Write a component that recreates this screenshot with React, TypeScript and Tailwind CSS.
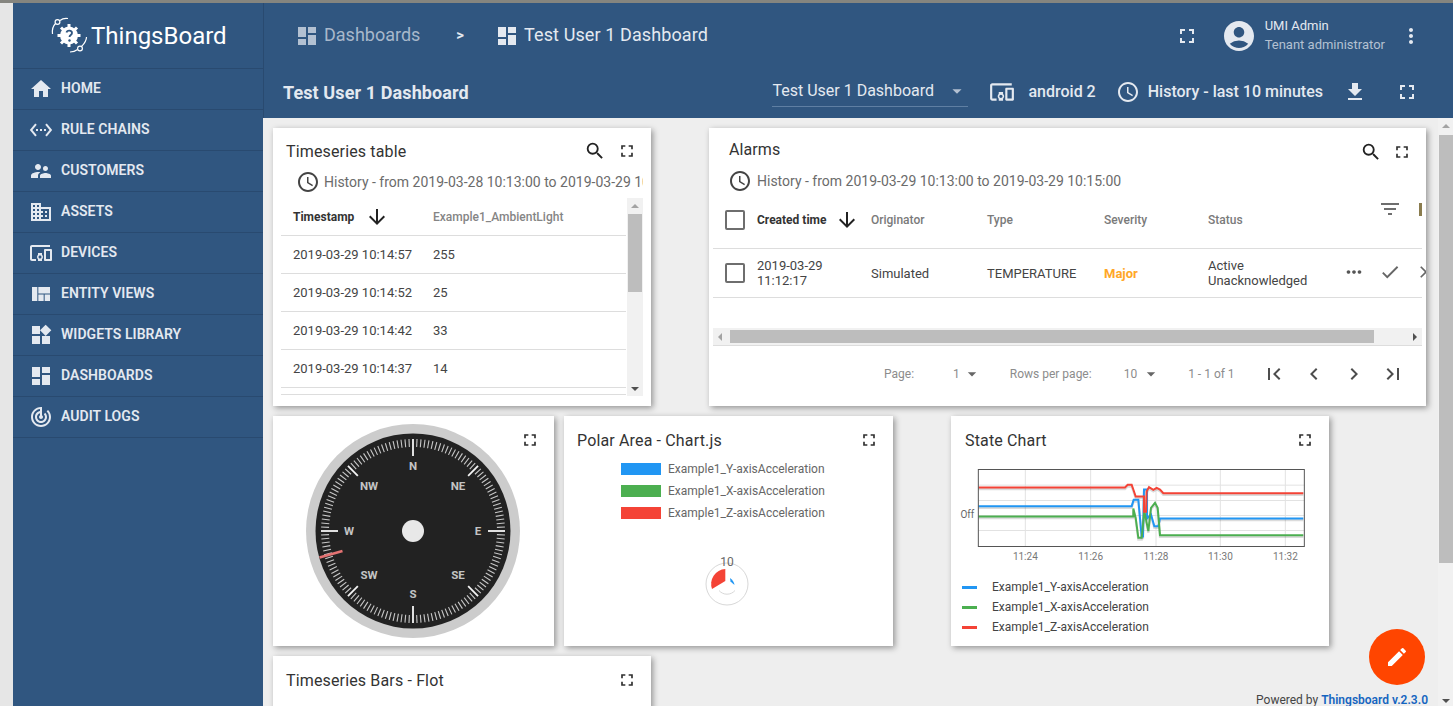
import type { ReactNode } from 'react';
import {
  MdAccessTime,
  MdAccountCircle,
  MdArrowDownward,
  MdArrowDropDown,
  MdCheck,
  MdChevronLeft,
  MdChevronRight,
  MdClose,
  MdDashboard,
  MdDevicesOther,
  MdDomain,
  MdEdit,
  MdFileDownload,
  MdFilterList,
  MdFirstPage,
  MdFullscreen,
  MdHome,
  MdLastPage,
  MdMoreHoriz,
  MdMoreVert,
  MdSearch,
  MdSettingsEthernet,
  MdSupervisorAccount,
  MdTrackChanges,
  MdViewQuilt,
  MdWidgets,
} from 'react-icons/md';

const NAV_ITEMS = [
  { label: 'HOME', Icon: MdHome },
  { label: 'RULE CHAINS', Icon: MdSettingsEthernet },
  { label: 'CUSTOMERS', Icon: MdSupervisorAccount },
  { label: 'ASSETS', Icon: MdDomain },
  { label: 'DEVICES', Icon: MdDevicesOther },
  { label: 'ENTITY VIEWS', Icon: MdViewQuilt },
  { label: 'WIDGETS LIBRARY', Icon: MdWidgets },
  { label: 'DASHBOARDS', Icon: MdDashboard },
  { label: 'AUDIT LOGS', Icon: MdTrackChanges },
];

const TABLE_ROWS = [
  { ts: '2019-03-29 10:14:57', value: '255' },
  { ts: '2019-03-29 10:14:52', value: '25' },
  { ts: '2019-03-29 10:14:42', value: '33' },
  { ts: '2019-03-29 10:14:37', value: '14' },
];

const SERIES = [
  { name: 'Example1_Y-axisAcceleration', swatch: 'bg-[#2196f3]' },
  { name: 'Example1_X-axisAcceleration', swatch: 'bg-[#4caf50]' },
  { name: 'Example1_Z-axisAcceleration', swatch: 'bg-[#f44336]' },
];

const RED_LINE = '100,229 540,229 548,221 560,221 566,238 572,256 597,256 597,302 603,302 605,240 612,228 625,236 635,230 645,235 655,246 1075,246';
const BLUE_LINE = '100,285 560,285 566,266 580,266 590,376 594,376 597,235 606,235 606,322 618,310 628,345 640,345 645,322 1075,322';
const GREEN_LINE = '100,316 565,316 565,292 572,320 580,380 590,380 598,300 610,360 618,290 630,275 638,290 645,372 1075,372';

function Logo() {
  return (
    <svg width="40" height="40" viewBox="50 17 40 40" className="shrink-0 text-white">
      <g fill="none" stroke="currentColor" strokeWidth="1.2">
        <circle cx="57.5" cy="23" r="2.4" />
        <path d="M60 21.5 C 63 19 65 19 68 19.5" />
        <path d="M55.5 24.5 C 53 27 52 31 52.5 35" />
        <circle cx="80" cy="49.5" r="2.4" />
        <path d="M77.6 50.5 C 75 52.5 73 53 70 53" />
        <path d="M81.5 47.5 C 84 45 86.5 42 86.5 38" />
      </g>
      <circle cx="69" cy="36.5" r="9" fill="currentColor" />
      <g stroke="currentColor" strokeWidth="3">
        <path d="M69 25v23M57.5 36.5h23M61 28.5l16 16M77 28.5l-16 16" />
      </g>
      <path d="M66.5 33.5c.5-2.5 5.5-2.5 5.5.5 0 2-2.5 2-2.5 4" fill="none" stroke="#305680" strokeWidth="1.8" />
      <circle cx="69.5" cy="41.5" r="1.2" fill="#305680" />
    </svg>
  );
}

function Sidebar() {
  return (
    <aside className="w-[250px] shrink-0 bg-[#305680] text-[#e4e9f0]">
      <div className="flex h-[65px] items-center gap-[1px] pl-[37px]">
        <Logo />
        <span className="text-[24px] leading-none text-white">ThingsBoard</span>
      </div>
      <nav className="border-t border-[#294a70]">
        {NAV_ITEMS.map(({ label, Icon }) => (
          <div key={label} className="flex h-[41px] items-center border-b border-[#294a70] pl-[16px]">
            <Icon size={24} className="shrink-0" />
            <span className="mb-[2px] ml-[8px] text-[14px] font-semibold tracking-[0.05px]">{label}</span>
          </div>
        ))}
      </nav>
    </aside>
  );
}

function Header() {
  return (
    <header className="h-[115px] shrink-0 border-l border-[#294a70] bg-[#305680] text-[#e4e9f0]">
      <div className="flex h-[65px] items-center pl-[31px] pr-[30px]">
        <MdDashboard size={24} className="text-[#b3c1d2]" />
        <span className="mb-[2px] ml-[5px] text-[18px] text-[#a8b8cb]">Dashboards</span>
        <span className="ml-[36px] text-[15px] font-bold">&gt;</span>
        <MdDashboard size={24} className="ml-[31px]" />
        <span className="mb-[2px] ml-[5px] text-[18px] tracking-[0.1px]">Test User 1 Dashboard</span>
        <MdFullscreen size={24} className="ml-auto" />
        <MdAccountCircle size={36} className="ml-[22px]" />
        <div className="ml-[8px] flex flex-col gap-[3px] text-[13px] leading-[16px]">
          <span>UMI Admin</span>
          <span className="text-[#b3c1d2]">Tenant administrator</span>
        </div>
        <MdMoreVert size={24} className="ml-[14px]" />
      </div>
      <div className="flex h-[50px] items-center pb-[2px] pl-[19px] pr-[34px]">
        <span className="text-[18px] font-bold tracking-[0.1px]">Test User 1 Dashboard</span>
        <div className="ml-auto flex h-[30px] w-[196px] items-center justify-between border-b border-[#5f7fa3] pb-[1px] text-[16px]">
          <span>Test User 1 Dashboard</span>
          <MdArrowDropDown size={22} className="text-[#b3c1d2]" />
        </div>
        <MdDevicesOther size={26} className="ml-[21px]" />
        <span className="ml-[13px] text-[16px] font-medium">android 2</span>
        <MdAccessTime size={24} className="ml-[20px]" />
        <span className="ml-[8px] text-[16px] font-medium">History - last 10 minutes</span>
        <MdFileDownload size={24} className="ml-[20px]" />
        <MdFullscreen size={24} className="ml-[28px]" />
      </div>
    </header>
  );
}

function Card({ className, children }: { className: string; children: ReactNode }) {
  return (
    <section className={`relative shrink-0 overflow-hidden bg-white shadow-[2px_2px_6px_rgba(0,0,0,0.38)] ${className}`}>
      {children}
    </section>
  );
}

function CardFullscreen() {
  return <MdFullscreen size={20} className="absolute top-[14px] right-[14px] text-[#2f2f2f]" />;
}

function TimeseriesTable() {
  return (
    <Card className="h-[278px] w-[378px]">
      <div className="flex h-[44px] items-center pt-[4px] pl-[13px] pr-[14px]">
        <h2 className="text-[16px] tracking-[0.15px] text-[#333]">Timeseries table</h2>
        <MdSearch size={22} className="ml-auto mb-[2px] text-[#222]" />
        <MdFullscreen size={20} className="ml-[11px] mb-[2px] text-[#2f2f2f]" />
      </div>
      <div className="flex h-[20px] w-[370px] items-center overflow-hidden pl-[23px] whitespace-nowrap text-[14px] text-[#6b6b6b]">
        <MdAccessTime size={24} className="shrink-0 text-[#444]" />
        <span className="ml-[4px]">History - from 2019-03-28 10:13:00 to 2019-03-29 10:15:00</span>
      </div>
      <div className="ml-[8px] mt-[6px] flex h-[198px] w-[362px]">
        <div className="w-[345px]">
          <div className="flex h-[38px] items-center border-b border-[#ddd] pl-[12px] text-[12px] font-medium">
            <span className="w-[72px] font-bold text-[#333]">Timestamp</span>
            <MdArrowDownward size={24} className="text-[#222]" />
            <span className="ml-[44px] text-[#858585]">Example1_AmbientLight</span>
          </div>
          {TABLE_ROWS.map((row) => (
            <div key={row.ts} className="flex h-[38px] items-center border-b border-[#ddd] pl-[12px] text-[13px] text-[#444]">
              <span className="w-[140px]">{row.ts}</span>
              <span>{row.value}</span>
            </div>
          ))}
          <div className="h-[7px] border-b border-[#ddd]" />
        </div>
        <div className="ml-[1px] flex w-[16px] flex-col items-center bg-[#f1f1f1]">
          <span className="mt-[6px] h-0 w-0 border-x-[4px] border-b-[4px] border-x-transparent border-b-[#a3a3a3]" />
          <span className="mt-[6px] h-[78px] w-[14px] bg-[#bdbdbd]" />
          <span className="mt-auto mb-[5px] h-0 w-0 border-x-[4px] border-t-[4px] border-x-transparent border-t-[#505050]" />
        </div>
      </div>
    </Card>
  );
}

function Checkbox({ className }: { className: string }) {
  return <span className={`block w-[20px] shrink-0 rounded-[2px] border-2 border-[#6e6e6e] ${className}`} />;
}

function AlarmsTable() {
  return (
    <Card className="h-[278px] w-[717px]">
      <div className="flex h-[43px] items-center pl-[20px] pr-[14px]">
        <h2 className="text-[16px] tracking-[0.1px] text-[#333]">Alarms</h2>
        <MdSearch size={22} className="ml-auto mt-[4px] text-[#222]" />
        <MdFullscreen size={20} className="ml-[10px] mt-[4px] text-[#2f2f2f]" />
      </div>
      <div className="flex h-[20px] items-center pl-[19px] text-[14px] text-[#6b6b6b]">
        <MdAccessTime size={24} className="text-[#444]" />
        <span className="ml-[5px]">History - from 2019-03-29 10:13:00 to 2019-03-29 10:15:00</span>
      </div>
      <div className="ml-[4px] mr-[4px] mt-[1px]">
        <div className="relative flex h-[57px] items-center border-b border-[#ddd] text-[12px] font-medium text-[#7a7a7a]">
          <Checkbox className="ml-[12px] h-[20px]" />
          <span className="ml-[12px] w-[72px] font-bold text-[#333]">Created time</span>
          <MdArrowDownward size={24} className="ml-[6px] text-[#222]" />
          <span className="ml-[12px] w-[116px]">Originator</span>
          <span className="w-[117px]">Type</span>
          <span className="w-[104px]">Severity</span>
          <span>Status</span>
          <MdFilterList size={24} className="absolute top-[5px] right-[20px] text-[#6e6e6e]" />
          <span className="absolute top-[11px] right-0 h-[13px] w-[3px] bg-[#8a7c4e]" />
        </div>
        <div className="relative flex h-[49px] items-center border-b border-[#ddd] text-[13px] leading-[15px] text-[#444]">
          <Checkbox className="ml-[12px] h-[20px]" />
          <span className="ml-[12px] w-[114px]">
            2019-03-29
            <br />
            11:12:17
          </span>
          <span className="w-[116px]">Simulated</span>
          <span className="w-[117px]">TEMPERATURE</span>
          <span className="w-[104px] font-bold text-[#ffa726]">Major</span>
          <span>
            Active
            <br />
            Unacknowledged
          </span>
          <MdMoreHoriz size={22} className="absolute top-[12px] right-[57px] text-[#555]" />
          <MdCheck size={22} className="absolute top-[12px] right-[21px] text-[#666]" />
          <MdClose size={20} className="absolute top-[13px] right-[-14px] text-[#666]" />
        </div>
        <div className="mt-[30px] flex h-[18px] items-center border-b border-[#ddd] bg-[#f1f1f1]">
          <span className="ml-[5px] h-0 w-0 border-y-[4px] border-r-[4px] border-y-transparent border-r-[#a3a3a3]" />
          <span className="ml-[8px] h-[13px] w-[644px] bg-[#bdbdbd]" />
          <span className="ml-auto mr-[5px] h-0 w-0 border-y-[4px] border-l-[4px] border-y-transparent border-l-[#505050]" />
        </div>
        <div className="flex h-[56px] items-center pl-[171px] text-[12px] text-[#8c8c8c]">
          <span>Page:</span>
          <span className="ml-[39px]">1</span>
          <MdArrowDropDown size={20} className="ml-[2px] text-[#666]" />
          <span className="ml-[28px]">Rows per page:</span>
          <span className="ml-[32px]">10</span>
          <MdArrowDropDown size={20} className="ml-[4px] text-[#666]" />
          <span className="ml-[27px]">1 - 1 of 1</span>
          <MdFirstPage size={24} className="ml-[27px] text-[#4d4d4d]" />
          <MdChevronLeft size={24} className="ml-[16px] text-[#4d4d4d]" />
          <MdChevronRight size={24} className="ml-[16px] text-[#4d4d4d]" />
          <MdLastPage size={24} className="ml-[15px] text-[#4d4d4d]" />
        </div>
      </div>
    </Card>
  );
}

function CompassDial() {
  const ticks = Array.from({ length: 144 }, (_, i) => i * 2.5);
  const majors = [0, 45, 90, 135, 180, 225, 270, 315];
  const labels = [
    { t: 'N', x: 0, y: -65 },
    { t: 'NE', x: 45, y: -45 },
    { t: 'E', x: 65, y: 0 },
    { t: 'SE', x: 45, y: 44 },
    { t: 'S', x: 0, y: 63 },
    { t: 'SW', x: -44, y: 44 },
    { t: 'W', x: -64, y: 0 },
    { t: 'NW', x: -44, y: -45 },
  ];
  return (
    <svg width="214" height="214" viewBox="-107 -107 214 214">
      <circle r="107" fill="#cccccc" />
      <circle r="97.5" fill="#222222" />
      {ticks.map((a) =>
        majors.includes(a) ? null : (
          <line key={a} x1="0" y1="-92" x2="0" y2="-84" stroke="#c8c8c8" strokeWidth="1.1" transform={`rotate(${a})`} />
        ),
      )}
      {majors.map((a) => (
        <line key={a} x1="0" y1="-92" x2="0" y2={a % 90 === 0 ? -75 : -78} stroke="#f5f5f5" strokeWidth="1.8" transform={`rotate(${a})`} />
      ))}
      {labels.map((l) => (
        <text key={l.t} x={l.x} y={l.y} textAnchor="middle" dominantBaseline="central" fontSize="11.5" fontWeight="700" fill="#c4c4c4">
          {l.t}
        </text>
      ))}
      <line x1="-93.5" y1="26.5" x2="-70.5" y2="20" stroke="#e57373" strokeWidth="2.6" />
      <circle r="11" fill="#e8e8e8" />
    </svg>
  );
}

function CompassCard() {
  return (
    <Card className="flex h-[230px] w-[281px] items-center justify-center pr-[1px]">
      <CompassDial />
      <CardFullscreen />
    </Card>
  );
}

function PolarChart() {
  return (
    <svg width="60" height="60" viewBox="-30 -30 60 60" className="mx-auto mt-[35px] translate-x-[-2px]">
      <circle r="21" fill="none" stroke="#d8d8d8" />
      <path d="M-8 6.5A10.5 10.5 0 0 0 8 6.5" fill="none" stroke="#d8d8d8" />
      <path d="M-1.7 -3V-15A15 15 0 0 0 -15 5Z" fill="#f44336" />
      <path d="M3 -6Q7 -3 7.5 1L3.5 -2.5Z" fill="#2196f3" />
      <text x="0" y="-18.5" textAnchor="middle" fontSize="12" fill="#666">
        10
      </text>
    </svg>
  );
}

function PolarCard() {
  return (
    <Card className="h-[230px] w-[329px]">
      <h2 className="pl-[13px] pt-[15px] text-[16px] leading-[20px] tracking-[0.15px] text-[#333]">Polar Area - Chart.js</h2>
      <CardFullscreen />
      <ul className="ml-[57px] mt-[12px] flex flex-col gap-[10px]">
        {SERIES.map((s) => (
          <li key={s.name} className="flex h-[12px] items-center text-[12px] text-[#666]">
            <span className={`h-[12px] w-[40px] ${s.swatch}`} />
            <span className="ml-[7px]">{s.name}</span>
          </li>
        ))}
      </ul>
      <PolarChart />
    </Card>
  );
}

// drawn in 3x units, same scale as the plot measurements
function StatePlot() {
  const vertical = [241, 437, 633, 826, 1021];
  const horizontal = [222, 268, 313, 358];
  const lines = [
    { points: BLUE_LINE, color: '#2196f3' },
    { points: GREEN_LINE, color: '#4caf50' },
    { points: RED_LINE, color: '#f44336' },
  ];
  return (
    <svg width="378" height="107" viewBox="18 150 1134 320" className="mt-[10px] block">
      {vertical.map((x) => (
        <line key={x} x1={x} y1="175" x2={x} y2="406" stroke="#e2e2e2" strokeWidth="3" />
      ))}
      {horizontal.map((y) => (
        <line key={y} x1="100" y1={y} x2="1078" y2={y} stroke="#e2e2e2" strokeWidth="3" />
      ))}
      {lines.map((l) => (
        <polyline key={`${l.color}-shadow`} points={l.points} fill="none" stroke="#000" strokeOpacity="0.14" strokeWidth="7" transform="translate(0 5)" />
      ))}
      {lines.map((l) => (
        <polyline key={l.color} points={l.points} fill="none" stroke={l.color} strokeWidth="6" />
      ))}
      <rect x="100" y="175" width="978" height="231" fill="none" stroke="#555" strokeWidth="3" />
      <text x="88" y="322" textAnchor="end" fontSize="30" fill="#666">
        Off
      </text>
      {['11:24', '11:26', '11:28', '11:30', '11:32'].map((t, i) => (
        <text key={t} x={vertical[i]} y="447" textAnchor="middle" fontSize="30" fill="#777">
          {t}
        </text>
      ))}
    </svg>
  );
}

function StateChartCard() {
  return (
    <Card className="h-[230px] w-[378px]">
      <h2 className="pl-[14px] pt-[15px] text-[16px] leading-[20px] tracking-[0.15px] text-[#333]">State Chart</h2>
      <CardFullscreen />
      <StatePlot />
      <ul className="ml-[11px] mt-[11px] flex flex-col gap-[4px]">
        {SERIES.map((s) => (
          <li key={s.name} className="flex h-[16px] items-center text-[12px] text-[#444]">
            <span className={`h-[3px] w-[15px] ${s.swatch}`} />
            <span className="ml-[15px]">{s.name}</span>
          </li>
        ))}
      </ul>
    </Card>
  );
}

function PageScrollbar() {
  return (
    <div className="flex w-[15px] shrink-0 flex-col items-center bg-[#f1f1f1]">
      <span className="mt-[6px] h-0 w-0 border-x-[4px] border-b-[4px] border-x-transparent border-b-[#a3a3a3]" />
      <span className="mt-[7px] h-[428px] w-[14px] bg-[#bdbdbd]" />
      <span className="mt-auto mb-[3px] h-0 w-0 border-x-[4px] border-t-[4px] border-x-transparent border-t-[#505050]" />
    </div>
  );
}

export default function App() {
  return (
    <div className="flex h-[706px] w-[1453px] flex-col overflow-hidden bg-[#e6e6e6] font-['Roboto',sans-serif]">
      <div className="h-[3px] shrink-0 bg-[#85857f]" />
      <div className="flex min-h-0 flex-1 pl-[13px]">
        <Sidebar />
        <main className="flex min-w-0 flex-1 flex-col">
          <Header />
          <div className="relative flex min-h-0 flex-1 bg-[#eeeeee]">
            <div className="flex min-w-0 flex-1 flex-col gap-[10px] overflow-hidden pl-[10px] pt-[10px]">
              <div className="flex gap-[58px]">
                <TimeseriesTable />
                <AlarmsTable />
              </div>
              <div className="flex">
                <CompassCard />
                <div className="ml-[10px]">
                  <PolarCard />
                </div>
                <div className="ml-[58px]">
                  <StateChartCard />
                </div>
              </div>
              <Card className="h-[230px] w-[378px]">
                <h2 className="pl-[13px] pt-[15px] text-[16px] leading-[20px] tracking-[0.15px] text-[#333]">Timeseries Bars - Flot</h2>
                <CardFullscreen />
              </Card>
            </div>
            <PageScrollbar />
            <button
              type="button"
              className="absolute right-[28px] bottom-[21px] flex h-[56px] w-[56px] items-center justify-center rounded-full bg-[#ff4500] text-white"
            >
              <MdEdit size={24} />
            </button>
            <p className="absolute right-[25px] bottom-[-1px] text-[12px] leading-[14px] text-[#444]">
              Powered by <span className="font-semibold text-[#1565c0]">Thingsboard v.2.3.0</span>
            </p>
          </div>
        </main>
      </div>
    </div>
  );
}
